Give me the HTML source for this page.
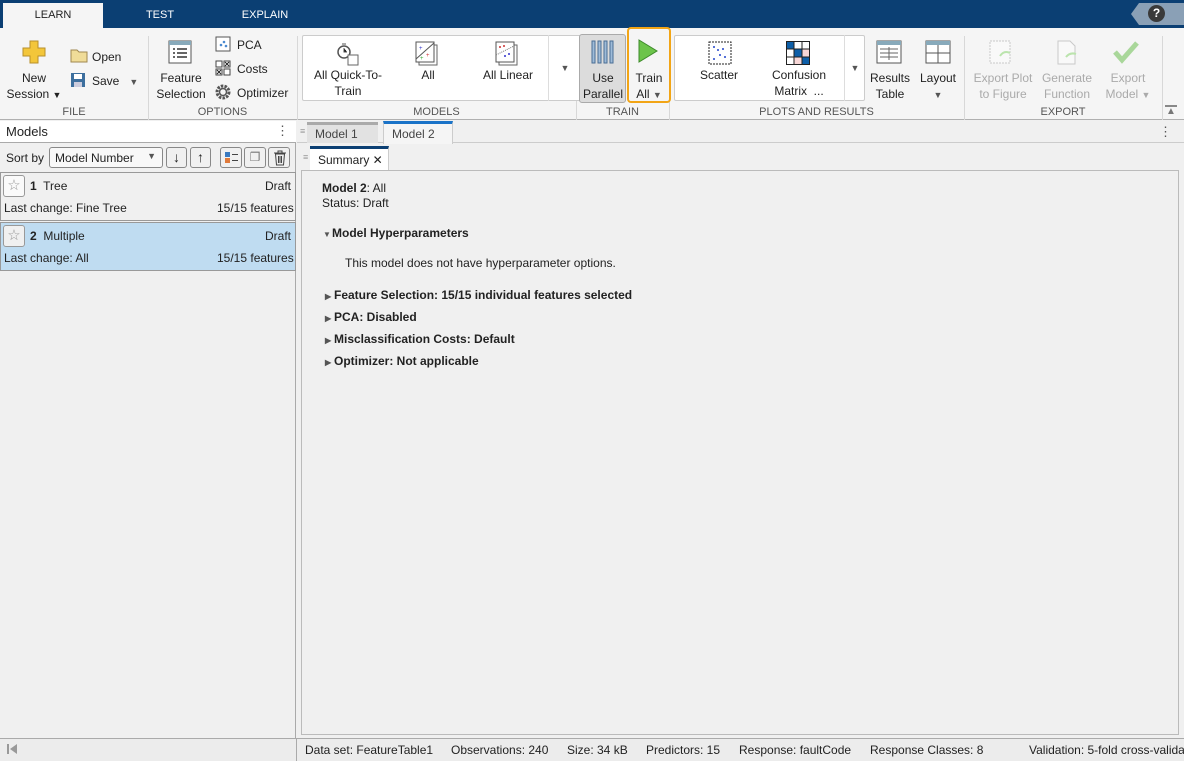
<!DOCTYPE html>
<html><head><meta charset="utf-8"><style>
*{margin:0;padding:0;box-sizing:border-box}
body{width:1184px;height:761px;position:relative;overflow:hidden;background:#f0f0f0;font-family:"Liberation Sans",Arial,sans-serif;font-size:12px;color:#222;white-space:nowrap}
.a{position:absolute}
.c{text-align:center;line-height:16px}
.g{color:#555;font-size:11px;text-align:center}
.dis{color:#aaa}
.sep{position:absolute;top:36px;width:1px;height:84px;background:#d8d8d8}
.b{font-weight:bold}
.tri{display:inline-block;font-size:8px;color:#555;width:9px}
</style></head><body>
<div class="a" style="left:0;top:0;width:1184px;height:28px;background:#0b3f73"></div>
<div class="a" style="left:3px;top:3px;width:100px;height:25px;background:#f5f5f5;color:#222;text-align:center;line-height:24px;font-size:11px">LEARN</div>
<div class="a" style="left:130px;top:3px;width:60px;line-height:24px;color:#fff;font-size:11px;text-align:center">TEST</div>
<div class="a" style="left:230px;top:3px;width:70px;line-height:24px;color:#fff;font-size:11px;text-align:center">EXPLAIN</div>
<div class="a" style="left:1131px;top:3px;width:53px;height:22px;background:#8aa0b6;clip-path:polygon(8px 0,100% 0,100% 100%,8px 100%,0 50%)"></div>
<div class="a" style="left:1148px;top:5px;width:17px;height:17px;border-radius:50%;background:#3a3a3a;color:#fff;font-weight:bold;font-size:12px;text-align:center;line-height:17px">?</div>
<div class="a" style="left:0;top:28px;width:1184px;height:92px;background:#f5f5f5;border-bottom:1px solid #b0b0b0"></div>
<div class="sep" style="left:148px"></div><div class="sep" style="left:297px"></div><div class="sep" style="left:576px"></div><div class="sep" style="left:669px"></div><div class="sep" style="left:964px"></div><div class="sep" style="left:1162px"></div>
<svg class="a" style="left:22px;top:40px" width="24" height="24"><path d="M8 1h8v7h7v8h-7v7H8v-7H1V8h7z" fill="#f3c63a" stroke="#b8902a"/></svg>
<div class="a c" style="left:2px;top:70px;width:64px">New<br>Session <span style="font-size:9px">▼</span></div>
<svg class="a" style="left:70px;top:48px" width="18" height="15"><path d="M1 2h6l2 2h8v10H1z" fill="#f0dc98" stroke="#a08850"/></svg>
<div class="a" style="left:92px;top:50px">Open</div>
<svg class="a" style="left:70px;top:72px" width="16" height="16"><rect x="1" y="1" width="14" height="14" fill="#3d6f9e"/><rect x="4" y="2" width="8" height="5" fill="#fff"/><rect x="4" y="10" width="8" height="5" fill="#ccd"/></svg>
<div class="a" style="left:92px;top:74px">Save &nbsp;&nbsp;<span style="font-size:9px;color:#555">▼</span></div>
<div class="a g" style="left:0;top:106px;width:148px">FILE</div>
<svg class="a" style="left:168px;top:40px" width="26" height="26"><rect x="1" y="1" width="22" height="22" fill="#fff" stroke="#555"/><rect x="1" y="1" width="22" height="4" fill="#8ab"/><path d="M5 9h2M9 9h10M5 13h2M9 13h10M5 17h2M9 17h10" stroke="#333" stroke-width="1.5"/></svg>
<div class="a c" style="left:152px;top:70px;width:58px">Feature<br>Selection</div>
<svg class="a" style="left:215px;top:36px" width="16" height="16"><rect x="1" y="1" width="14" height="14" fill="#fff" stroke="#555"/><circle cx="6" cy="9" r="1.3" fill="#4a8ad0"/><circle cx="9" cy="6" r="1.3" fill="#4a8ad0"/><circle cx="11" cy="10" r="1.3" fill="#4a8ad0"/></svg>
<div class="a" style="left:237px;top:38px">PCA</div>
<svg class="a" style="left:215px;top:60px" width="16" height="16"><rect x="1" y="1" width="6" height="6" fill="#fff" stroke="#444"/><rect x="9" y="1" width="6" height="6" fill="#fff" stroke="#444"/><rect x="1" y="9" width="6" height="6" fill="#fff" stroke="#444"/><rect x="9" y="9" width="6" height="6" fill="#fff" stroke="#444"/><path d="M10 2l4 4M14 2l-4 4M2 10l4 4M6 10l-4 4" stroke="#222"/></svg>
<div class="a" style="left:237px;top:62px">Costs</div>
<svg class="a" style="left:215px;top:84px" width="16" height="16"><circle cx="8" cy="8" r="6" fill="none" stroke="#555" stroke-width="3" stroke-dasharray="2.5 1.2"/><circle cx="8" cy="8" r="3.5" fill="none" stroke="#555" stroke-width="1.5"/></svg>
<div class="a" style="left:237px;top:86px">Optimizer</div>
<div class="a g" style="left:148px;top:106px;width:149px">OPTIONS</div>
<div class="a" style="left:302px;top:35px;width:279px;height:66px;background:#fff;border:1px solid #ccc;border-radius:2px"></div>
<div class="a" style="left:548px;top:35px;width:33px;height:66px;border-left:1px solid #ddd;text-align:center;line-height:66px;font-size:9px;color:#555">▼</div>
<svg class="a" style="left:334px;top:41px" width="26" height="26"><circle cx="10" cy="11" r="6" fill="#fff" stroke="#555" stroke-width="1.5"/><path d="M10 7v4h3M8 3h4" stroke="#555"/><rect x="14" y="14" width="10" height="10" fill="#fff" stroke="#666"/></svg>
<div class="a c" style="left:305px;top:67px;width:86px">All Quick-To-<br>Train</div>
<svg class="a" style="left:415px;top:41px" width="24" height="26"><rect x="4" y="4" width="18" height="20" fill="#fff" stroke="#666"/><rect x="1" y="1" width="18" height="20" fill="#fff" stroke="#555"/><path d="M1 18L19 2" stroke="#555"/><text x="4" y="9" font-size="6" fill="#33c">+</text><text x="11" y="16" font-size="6" fill="#c33">+</text><text x="5" y="19" font-size="6" fill="#3a3">+</text></svg>
<div class="a c" style="left:400px;top:67px;width:56px">All</div>
<svg class="a" style="left:495px;top:41px" width="24" height="26"><rect x="4" y="4" width="18" height="20" fill="#fff" stroke="#666"/><rect x="1" y="1" width="18" height="20" fill="#fff" stroke="#555"/><path d="M1 14L19 5" stroke="#777" stroke-dasharray="1 1"/><circle cx="5" cy="6" r="1" fill="#c33"/><circle cx="9" cy="5" r="1" fill="#c33"/><circle cx="10" cy="15" r="1" fill="#33c"/><circle cx="14" cy="13" r="1" fill="#33c"/></svg>
<div class="a c" style="left:470px;top:67px;width:76px">All Linear</div>
<div class="a g" style="left:297px;top:106px;width:279px">MODELS</div>
<div class="a" style="left:579px;top:34px;width:47px;height:69px;background:#dcdcdc;border:1px solid #aaa;border-radius:3px"></div>
<svg class="a" style="left:590px;top:40px" width="26" height="24"><g fill="#9ebbd8" stroke="#4a6e95"><rect x="2" y="1" width="3" height="22"/><rect x="8" y="1" width="3" height="22"/><rect x="14" y="1" width="3" height="22"/><rect x="20" y="1" width="3" height="22"/></g></svg>
<div class="a c" style="left:580px;top:70px;width:46px">Use<br>Parallel</div>
<div class="a" style="left:627px;top:27px;width:44px;height:76px;border:2px solid #f2a516;border-radius:4px"></div>
<svg class="a" style="left:637px;top:39px" width="22" height="24"><path d="M2 1L20 12L2 23z" fill="#6cc44a" stroke="#3d8a2a"/></svg>
<div class="a c" style="left:627px;top:70px;width:44px">Train<br>All <span style="font-size:9px;color:#555">▼</span></div>
<div class="a g" style="left:576px;top:106px;width:93px">TRAIN</div>
<div class="a" style="left:674px;top:35px;width:191px;height:66px;background:#fff;border:1px solid #ccc;border-radius:2px"></div>
<div class="a" style="left:844px;top:35px;width:21px;height:66px;border-left:1px solid #ddd;text-align:center;line-height:66px;font-size:9px;color:#555">▼</div>
<svg class="a" style="left:708px;top:41px" width="24" height="24"><rect x="1" y="1" width="22" height="22" fill="#fff" stroke="#222" stroke-dasharray="2 1"/><g fill="#2244cc"><circle cx="6" cy="6" r="1"/><circle cx="10" cy="9" r="1"/><circle cx="15" cy="8" r="1"/><circle cx="12" cy="14" r="1"/><circle cx="17" cy="16" r="1"/><circle cx="6" cy="18" r="1"/></g></svg>
<div class="a c" style="left:690px;top:67px;width:58px">Scatter</div>
<svg class="a" style="left:786px;top:41px" width="24" height="24"><rect x="0.5" y="0.5" width="23" height="23" fill="#fff" stroke="#222"/><rect x="1" y="1" width="7" height="7" fill="#0e5fa8"/><rect x="8" y="8" width="8" height="8" fill="#0e5fa8"/><rect x="16" y="16" width="7" height="7" fill="#0e5fa8"/><rect x="16" y="8" width="7" height="8" fill="#f7d6d6"/><rect x="8" y="16" width="8" height="7" fill="#f7d6d6"/><path d="M8 0v24M16 0v24M0 8h24M0 16h24" stroke="#222"/></svg>
<div class="a c" style="left:760px;top:67px;width:78px">Confusion<br>Matrix &nbsp;...</div>
<svg class="a" style="left:876px;top:40px" width="26" height="24"><rect x="1" y="1" width="24" height="22" fill="#fff" stroke="#555"/><rect x="1" y="1" width="24" height="4" fill="#8ab"/><path d="M4 9h18M4 13h18M4 17h18M13 7v13" stroke="#666"/></svg>
<div class="a c" style="left:866px;top:70px;width:48px">Results<br>Table</div>
<svg class="a" style="left:925px;top:40px" width="26" height="24"><rect x="1" y="1" width="24" height="22" fill="#fff" stroke="#555"/><rect x="1" y="1" width="24" height="4" fill="#8ab"/><path d="M1 13h24M13 5v18" stroke="#555"/></svg>
<div class="a c" style="left:914px;top:70px;width:48px">Layout<br><span style="font-size:9px;color:#555">▼</span></div>
<div class="a g" style="left:669px;top:106px;width:295px">PLOTS AND RESULTS</div>
<svg class="a" style="left:988px;top:40px" width="26" height="26" opacity=".4"><rect x="2" y="1" width="20" height="22" fill="#fff" stroke="#888" stroke-dasharray="2 1"/><path d="M12 16q4-6 10-3" stroke="#6c4" fill="none" stroke-width="2"/></svg>
<div class="a c dis" style="left:968px;top:70px;width:70px">Export Plot<br>to Figure</div>
<svg class="a" style="left:1055px;top:40px" width="24" height="26" opacity=".4"><path d="M3 1h12l5 5v18H3z" fill="#fff" stroke="#888"/><path d="M11 17q4-5 10-3" stroke="#6c4" fill="none" stroke-width="2"/></svg>
<div class="a c dis" style="left:1037px;top:70px;width:60px">Generate<br>Function</div>
<svg class="a" style="left:1113px;top:40px" width="26" height="24"><path d="M2 12l7 8L24 3" stroke="#a9d79a" stroke-width="5" fill="none"/></svg>
<div class="a c dis" style="left:1098px;top:70px;width:60px">Export<br>Model <span style="font-size:9px">▼</span></div>
<div class="a g" style="left:964px;top:106px;width:198px">EXPORT</div>
<div class="a" style="left:1165px;top:105px;width:12px;height:12px;color:#777;font-size:10px;border-top:2px solid #888;text-align:center;line-height:10px">▲</div>
<div class="a" style="left:0;top:121px;width:296px;height:617px;background:#f0f0f0;border-right:1px solid #aaa"></div>
<div class="a" style="left:0;top:121px;width:296px;height:22px;background:#fff;border-bottom:1px solid #aaa"></div>
<div class="a" style="left:6px;top:124px;font-size:13px">Models</div>
<div class="a" style="left:276px;top:123px;font-size:13px;color:#555">⋮</div>
<div class="a" style="left:6px;top:151px">Sort by</div>
<div class="a" style="left:49px;top:147px;width:114px;height:21px;border:1px solid #888;border-radius:3px;background:#f8f8f8;padding:3px 5px">Model Number<span style="position:absolute;right:6px;top:3px;font-size:9px;color:#555">▼</span></div>
<div class="a" style="left:166px;top:147px;width:21px;height:21px;border:1px solid #888;border-radius:3px;text-align:center;font-size:14px;line-height:19px">↓</div>
<div class="a" style="left:190px;top:147px;width:21px;height:21px;border:1px solid #888;border-radius:3px;text-align:center;font-size:14px;line-height:19px">↑</div>
<div class="a" style="left:220px;top:147px;width:22px;height:21px;border:1px solid #888;border-radius:3px"><div class="a" style="left:4px;top:4px;width:5px;height:5px;background:#3a7ac0"></div><div class="a" style="left:4px;top:10px;width:5px;height:5px;background:#e07a3a"></div><div class="a" style="left:11px;top:6px;width:6px;height:1px;background:#444"></div><div class="a" style="left:11px;top:12px;width:6px;height:1px;background:#444"></div></div>
<div class="a" style="left:244px;top:147px;width:22px;height:21px;border:1px solid #888;border-radius:3px;text-align:center;color:#777;line-height:19px">❐</div>
<div class="a" style="left:268px;top:147px;width:22px;height:21px;border:1px solid #888;border-radius:3px"><svg class="a" style="left:4px;top:2px" width="14" height="16"><path d="M1 3h12M5 3V1h4v2M2.5 4l1 11h7l1-11z" fill="#eee" stroke="#444"/><path d="M5.5 6v7M7 6v7M8.5 6v7" stroke="#444"/></svg></div>
<div class="a" style="left:0;top:172px;width:296px;height:49px;background:#f0f0f0;border:1px solid #999"></div>
<div class="a" style="left:3px;top:175px;width:22px;height:22px;border:1px solid #999;border-radius:3px;background:#fafafa;text-align:center;color:#999;font-size:15px;line-height:20px">☆</div>
<div class="a" style="left:30px;top:179px"><b>1</b>&nbsp; Tree</div>
<div class="a" style="left:265px;top:179px">Draft</div>
<div class="a" style="left:4px;top:201px">Last change: Fine Tree</div>
<div class="a" style="left:217px;top:201px">15/15 features</div>
<div class="a" style="left:0;top:222px;width:296px;height:49px;background:#bfdcf1;border:1px solid #999"></div>
<div class="a" style="left:3px;top:225px;width:22px;height:22px;border:1px solid #999;border-radius:3px;background:#f0f0f0;text-align:center;color:#999;font-size:15px;line-height:20px">☆</div>
<div class="a" style="left:30px;top:229px"><b>2</b>&nbsp; Multiple</div>
<div class="a" style="left:265px;top:229px">Draft</div>
<div class="a" style="left:4px;top:251px">Last change: All</div>
<div class="a" style="left:217px;top:251px">15/15 features</div>
<div class="a" style="left:297px;top:121px;width:887px;height:22px;background:#f0f0f0;border-bottom:1px solid #ccc"></div>
<div class="a" style="left:300px;top:126px;color:#999;font-size:9px">≡</div>
<div class="a" style="left:307px;top:122px;width:71px;height:21px;background:#e2e2e2;border-top:3px solid #aaa;padding:2px 8px;color:#444">Model 1</div>
<div class="a" style="left:383px;top:121px;width:70px;height:23px;background:#f5f5f5;border-top:3px solid #1a73c8;border-left:1px solid #ccc;border-right:1px solid #ccc;padding:3px 8px;color:#444">Model 2</div>
<div class="a" style="left:1159px;top:124px;color:#555;font-size:13px">⋮</div>
<div class="a" style="left:303px;top:152px;color:#999;font-size:9px">≡</div>
<div class="a" style="left:310px;top:146px;width:79px;height:24px;background:#fff;border-top:3px solid #0b3f73;border-right:1px solid #ccc;padding:4px 8px;line-height:14px">Summary ✕</div>
<div class="a" style="left:301px;top:170px;width:878px;height:565px;border:1px solid #bbb;background:#f0f0f0"></div>
<div class="a" style="left:322px;top:181px"><b>Model 2</b>: All</div>
<div class="a" style="left:322px;top:196px">Status: Draft</div>
<div class="a b" style="left:323px;top:226px"><span class="tri">▼</span>Model Hyperparameters</div>
<div class="a" style="left:345px;top:256px;color:#222">This model does not have hyperparameter options.</div>
<div class="a b" style="left:325px;top:288px"><span class="tri">▶</span>Feature Selection: 15/15 individual features selected</div>
<div class="a b" style="left:325px;top:310px"><span class="tri">▶</span>PCA: Disabled</div>
<div class="a b" style="left:325px;top:332px"><span class="tri">▶</span>Misclassification Costs: Default</div>
<div class="a b" style="left:325px;top:354px"><span class="tri">▶</span>Optimizer: Not applicable</div>
<div class="a" style="left:0;top:738px;width:1184px;height:23px;background:#ececec;border-top:1px solid #aaa"></div>
<div class="a" style="left:296px;top:738px;width:1px;height:23px;background:#aaa"></div>
<svg class="a" style="left:6px;top:743px" width="12" height="12"><rect x="1" y="1" width="2" height="10" fill="#999"/><path d="M11 1L4 6l7 5z" fill="#999"/></svg>
<div class="a" style="left:305px;top:743px">Data set: FeatureTable1</div>
<div class="a" style="left:451px;top:743px">Observations: 240</div>
<div class="a" style="left:567px;top:743px">Size: 34 kB</div>
<div class="a" style="left:646px;top:743px">Predictors: 15</div>
<div class="a" style="left:739px;top:743px">Response: faultCode</div>
<div class="a" style="left:870px;top:743px">Response Classes: 8</div>
<div class="a" style="left:1029px;top:743px">Validation: 5-fold cross-validation</div>
</body></html>
